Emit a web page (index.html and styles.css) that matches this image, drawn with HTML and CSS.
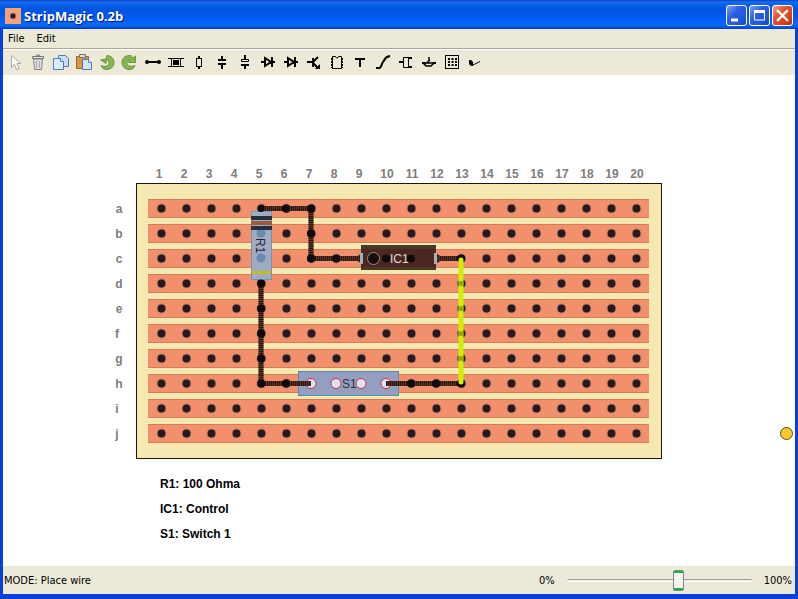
FILE: index.html
```html
<!DOCTYPE html>
<html lang="en">
<head>
<meta charset="utf-8">
<title>StripMagic 0.2b</title>
<link rel="stylesheet" href="styles.css">
</head>
<body>
<div class="window">
  <header class="titlebar">
    <svg class="app-icon" viewBox="0 0 16 16" aria-hidden="true"><rect width="16" height="16" fill="#f4a27a"/><circle cx="8" cy="8" r="3" fill="#2b1c1c" stroke="#a77" stroke-width="1"/></svg>
    <h1 class="title">StripMagic 0.2b</h1>
    <div class="window-buttons">
      <button class="wbtn" type="button" aria-label="Minimize"><svg viewBox="0 0 19 19"><path d="M4 14h7" stroke="#fff" stroke-width="3"/></svg></button>
      <button class="wbtn" type="button" aria-label="Maximize"><svg viewBox="0 0 19 19"><path d="M4.500 5v9h10V5" fill="none" stroke="#fff"/><path d="M4 5.500h11" stroke="#fff" stroke-width="3"/></svg></button>
      <button class="wbtn wbtn-close" type="button" aria-label="Close"><svg viewBox="0 0 19 19"><path d="M5 5l9 9M14 5l-9 9" stroke="#fff" stroke-width="2.400" stroke-linecap="square"/></svg></button>
    </div>
  </header>

  <nav class="menubar">
    <button class="menu" type="button">File</button>
    <button class="menu" type="button">Edit</button>
  </nav>

  <div class="toolbar" role="toolbar" aria-label="Tools">
    <button class="tool" type="button" aria-label="Select"><svg viewBox="0 0 23 23"><path d="M8.500 4.500v12l3-3 2 5 2.500-1-2-5h4z" fill="#fafafa" stroke="#aaa"/></svg></button>
    <button class="tool" type="button" aria-label="Delete"><svg viewBox="0 0 23 23"><path d="M7.500 8l1 10.500h7L16.500 8z" fill="#ddd" stroke="#888"/><path d="M10.500 10v7M13.500 10v7" stroke="#aaa"/><path d="M6.500 5.500h11v2h-11z" fill="#e8e8e8" stroke="#777"/><path d="M10.500 5V4h3v1" fill="none" stroke="#777"/></svg></button>
    <button class="tool" type="button" aria-label="Copy"><svg viewBox="0 0 23 23"><path d="M9.500 4.500h7l3 3v8h-10z" fill="#c9dcf8" stroke="#4a7cc4"/><path d="M4.500 7.500h7l3 3v8h-10z" fill="#deebfc" stroke="#4a7cc4"/><path d="M11.500 7.500v3h3" fill="#fff" stroke="#4a7cc4"/></svg></button>
    <button class="tool" type="button" aria-label="Paste"><svg viewBox="0 0 23 23"><path d="M4.500 5.500h12v12h-12z" fill="#d99547" stroke="#a3652a"/><path d="M7.500 3.500h6v3h-6z" fill="#ddd" stroke="#777"/><path d="M10.500 8.500h6l3 3v7h-9z" fill="#d4e4fa" stroke="#4a7cc4"/><path d="M16.500 8.500v3h3" fill="#fff" stroke="#4a7cc4"/></svg></button>
    <button class="tool" type="button" aria-label="Undo"><svg viewBox="0 0 23 23"><path d="M12 4.500c4 0 7 3 7 7s-3 7-7 7c-3 0-5-1-6-4 3 1.500 8 1 8-2.500 0-2-1-3-2.500-3l-.5 3.500L5.500 9 11 8z" fill="#86b552" stroke="#5b8a30" stroke-width=".8"/></svg></button>
    <button class="tool" type="button" aria-label="Redo"><svg viewBox="0 0 23 23"><path d="M11 4.500c-4 0-7 3-7 7s3 7 7 7c3 0 5-1 6-4-3 1.500-8 1-8-2.500 0-2 1-3 2.500-3l-1 2.500h7V5l-2.500 2C14 5 13 4.500 11 4.500z" fill="#86b552" stroke="#5b8a30" stroke-width=".8"/></svg></button>
    <button class="tool" type="button" aria-label="Wire"><svg viewBox="0 0 23 23"><path d="M6 11h12" stroke="#000" stroke-width="2"/><circle cx="6" cy="11" r="2"/><circle cx="18" cy="11" r="2"/></svg></button>
    <button class="tool" type="button" aria-label="Cut strip"><svg viewBox="0 0 23 23"><path d="M4 7.500h16M4 15.500h16M7.500 8v7M16.500 8v7" stroke="#000"/><rect x="9" y="9" width="6" height="5"/></svg></button>
    <button class="tool" type="button" aria-label="Resistor"><svg viewBox="0 0 23 23"><path d="M12 5v3M12 15v3" stroke="#000" stroke-width="2"/><rect x="9.500" y="7.500" width="5" height="8" fill="none" stroke="#000"/></svg></button>
    <button class="tool" type="button" aria-label="Capacitor"><svg viewBox="0 0 23 23"><path d="M12 5v4M12 13v5M8 9h8M8 13h8" stroke="#000" stroke-width="2"/></svg></button>
    <button class="tool" type="button" aria-label="Electrolytic capacitor"><svg viewBox="0 0 23 23"><path d="M12 4v4M12 14v4M8 14h8" stroke="#000" stroke-width="2"/><path d="M8.500 8.500h7v2h-7z" fill="none" stroke="#000"/></svg></button>
    <button class="tool" type="button" aria-label="Diode"><svg viewBox="0 0 23 23"><path d="M5 11h4M15 11h4M9 7l6 4-6 4zM16 6v10" fill="none" stroke="#000" stroke-width="2"/></svg></button>
    <button class="tool" type="button" aria-label="LED"><svg viewBox="0 0 23 23"><path d="M5 11h4M15 11h4M9 7l6 4-6 4zM16 6v10" fill="none" stroke="#000" stroke-width="2"/></svg></button>
    <button class="tool" type="button" aria-label="Transistor"><svg viewBox="0 0 23 23"><path d="M5 11h5M11 7v9M11 11l5-5M11 12l5 5" fill="none" stroke="#000" stroke-width="2"/><path d="M18 18v-5l-5 5z"/></svg></button>
    <button class="tool" type="button" aria-label="Integrated circuit"><svg viewBox="0 0 23 23"><path d="M7.500 5.500h3l1 1.500h1l1-1.500h3v12h-9z" fill="none" stroke="#000"/><path d="M7 7v10M17 7v10" stroke="#000" stroke-width="2" stroke-dasharray="2 1"/></svg></button>
    <button class="tool" type="button" aria-label="Text"><svg viewBox="0 0 23 23"><path d="M7 8h10M12 8v8" stroke="#000" stroke-width="2"/></svg></button>
    <button class="tool" type="button" aria-label="Flexible wire"><svg viewBox="0 0 23 23"><path d="M5 17h3c3 0 2-4 4-6s1-5 7-6" fill="none" stroke="#000" stroke-width="2"/></svg></button>
    <button class="tool" type="button" aria-label="Connector"><svg viewBox="0 0 23 23"><path d="M5 11h4M14 7h4M14 16h4" stroke="#000" stroke-width="2"/><path d="M9.500 6.500h5v10h-5z" fill="none" stroke="#000"/></svg></button>
    <button class="tool" type="button" aria-label="Switch"><svg viewBox="0 0 23 23"><path d="M5 12h3M16 12h3" stroke="#000" stroke-width="2"/><path d="M7 12v1l2 2h5l3-3zM8 13l5-4M12 6v6" fill="none" stroke="#000" stroke-width="1.500"/></svg></button>
    <button class="tool" type="button" aria-label="Board"><svg viewBox="0 0 23 23"><rect x="5.500" y="4.500" width="13" height="13" fill="none" stroke="#000"/><path d="M8 8h9M8 11h9M8 14h9" stroke="#000" stroke-width="2" stroke-dasharray="2 1.500"/></svg></button>
    <button class="tool" type="button" aria-label="Check"><svg viewBox="0 0 23 23"><path d="M6 9h2l2 2v4H8l-2-2z"/><path d="M9 14.500l8-4" stroke="#000"/></svg></button>
  </div>

  <main class="canvas">
    <svg class="drawing" viewBox="3 75 792 491" role="img" aria-label="Stripboard layout">
      <defs>
        <pattern id="strip" x="148" y="199" width="25" height="25" patternUnits="userSpaceOnUse">
          <rect width="25" height="19" fill="#d57b58"/>
          <rect y="1" width="25" height="17" fill="#f2906c"/>
          <circle cx="13.500" cy="9.500" r="4.900" fill="#b08078"/>
          <circle cx="13.500" cy="9.500" r="3.900" fill="#2a1917"/>
        </pattern>
      </defs>
      <rect class="board" x="136.500" y="183.500" width="525" height="275"/>
      <rect x="148" y="199" width="501" height="244" fill="url(#strip)"/>

      <g class="axis">
        <text x="159" y="178">1</text><text x="184" y="178">2</text><text x="209" y="178">3</text><text x="234" y="178">4</text><text x="259" y="178">5</text>
        <text x="284" y="178">6</text><text x="309" y="178">7</text><text x="334" y="178">8</text><text x="359" y="178">9</text><text x="387" y="178">10</text>
        <text x="412" y="178">11</text><text x="437" y="178">12</text><text x="462" y="178">13</text><text x="487" y="178">14</text><text x="512" y="178">15</text>
        <text x="537" y="178">16</text><text x="562" y="178">17</text><text x="587" y="178">18</text><text x="612" y="178">19</text><text x="637" y="178">20</text>
        <text x="119" y="213">a</text><text x="119" y="238">b</text><text x="119" y="263">c</text><text x="119" y="288">d</text><text x="119" y="313">e</text>
        <text x="117" y="338">f</text><text x="119" y="363">g</text><text x="119" y="388">h</text><text x="117" y="413">i</text><text x="117" y="438">j</text>
      </g>

      <g class="part">
        <rect x="251.500" y="211.500" width="20" height="68" fill="#9fabc2" stroke="#7494b5"/>
        <circle cx="261" cy="233" r="4.500" fill="#688cad"/><circle cx="261" cy="258" r="4.500" fill="#688cad"/>
        <path d="M251 218h21M251 228h21" stroke="#252f38" stroke-width="4"/>
        <path d="M251 223h21" stroke="#9a5a3c" stroke-width="4"/>
        <path d="M252 272.500h19" stroke="#c5bd28" stroke-width="3"/>
        <text class="label" transform="translate(256 238) rotate(90)" fill="#222">R1</text>
      </g>
      <g class="part">
        <rect x="298.500" y="371.500" width="100" height="24" fill="#939fc1" stroke="#578bb4"/>
        <g fill="#dde4f0" stroke="#dc2845"><circle cx="311" cy="383.500" r="5"/><circle cx="336" cy="383.500" r="5"/><circle cx="361" cy="383.500" r="5"/><circle cx="386" cy="383.500" r="5"/></g>
        <text class="label" x="342" y="388" fill="#333">S1</text>
      </g>

      <g class="wire">
        <path d="M261 208.500h50v50h50M261 283v100.500h50M386 383.500h75M436 258.500h25"/>
        <path class="wire-weave" d="M261 208.500h50M311 208v50M311 258.500h50M261 283v100M261 383.500h50M386 383.500h75M436 258.500h25"/>
      </g>
      <g fill="#100b0a"><circle cx="261" cy="208.500" r="3.500"/><circle cx="286" cy="208.500" r="4"/><circle cx="311" cy="208.500" r="4"/><circle cx="311" cy="233.500" r="4"/><circle cx="311" cy="258.500" r="4"/><circle cx="336" cy="258.500" r="4"/><circle cx="261" cy="283.500" r="4"/><circle cx="261" cy="308.500" r="4"/><circle cx="261" cy="333.500" r="4"/><circle cx="261" cy="358.500" r="4"/><circle cx="261" cy="383.500" r="4"/><circle cx="286" cy="383.500" r="4"/><circle cx="411" cy="383.500" r="4"/><circle cx="436" cy="383.500" r="4"/><circle cx="461" cy="383.500" r="4"/><circle cx="461" cy="258.500" r="4"/></g>
      <path d="M461 260v122" stroke="#cdf005" stroke-width="5" stroke-linecap="round"/>
      <g fill="#93a708"><circle cx="461" cy="283.500" r="2.500"/><circle cx="461" cy="308.500" r="2.500"/><circle cx="461" cy="333.500" r="2.500"/><circle cx="461" cy="358.500" r="2.500"/></g>

      <g class="part">
        <rect x="361" y="245" width="75" height="25" fill="#47392a"/>
        <rect x="361" y="249" width="75" height="18" fill="#4c271f"/>
        <path d="M360 253h3v11h-3zM434 253h3v11h-3z" fill="#a4afb8"/>
        <circle cx="386" cy="258.500" r="4" fill="#100b0a"/><circle cx="411" cy="258.500" r="4" fill="#100b0a"/>
        <circle cx="373.500" cy="258.500" r="6" fill="#180f0d" stroke="#9a8c82"/>
        <text class="label" x="390" y="263" fill="#ddd">IC1</text>
      </g>

      <g class="notes">
        <text x="160" y="488">R1: 100 Ohma</text>
        <text x="160" y="513">IC1: Control</text>
        <text x="160" y="538">S1: Switch 1</text>
      </g>
      <circle cx="786.500" cy="433.500" r="6" fill="#fac82d" stroke="#5e4c1c"/>
    </svg>
  </main>

  <footer class="statusbar">
    <span class="mode">MODE: Place wire</span>
    <label for="opacity">0%</label>
    <input class="slider" id="opacity" type="range" min="0" max="100" value="61">
    <label for="opacity">100%</label>
  </footer>
</div>
</body>
</html>
```
FILE: styles.css
```css
* { box-sizing: border-box; }

body {
  margin: 0;
  font-family: "DejaVu Sans Condensed", "Noto Sans", sans-serif;
  font-size: 11px;
  color: #000;
}

button {
  padding: 0;
  border: 0;
  background: none;
  font: inherit;
  color: inherit;
}

svg { display: block; }

.window {
  display: flex;
  flex-direction: column;
  min-height: 100vh;
  border: solid #0840dc;
  border-width: 0 3px 4px;
  background: #ece9d8;
  box-shadow: inset 0 -1px #0840dc;
}

.titlebar {
  display: flex;
  align-items: center;
  gap: 3px;
  height: 29px;
  margin: 0 -3px;
  padding: 2px 5px 0;
  background: linear-gradient(#0a3fc0 0, #1a6cf0 2px, #0560ea 5px, #0054e0 9px, #0058ec 16px, #0569fc 24px, #0560f2 26px, #003dc4 29px);
}

.app-icon { width: 16px; height: 16px; }

.title {
  flex: 1;
  margin: 0;
  font-family: "Open Sans", sans-serif;
  font-size: 13px;
  font-weight: 700;
  line-height: 18px;
  color: #fff;
  text-shadow: 1px 1px 1px #0a1883;
}

.window-buttons { display: flex; gap: 2px; }

.wbtn {
  width: 21px;
  height: 21px;
  border: 1px solid #fff;
  border-radius: 3px;
  background: linear-gradient(135deg, #7aa0f4, #2a5ee0 40%, #2458dc 70%, #1a48b8);
}

.wbtn-close { background: linear-gradient(135deg, #f0a080, #e2512c 40%, #d8441c 70%, #b03010); }

.menubar {
  display: flex;
  gap: 12px;
  height: 20px;
  padding: 0 5px;
  border-bottom: 1px solid #aca899;
}

.menu { line-height: 18px; }

.toolbar {
  display: flex;
  align-items: center;
  height: 26px;
  border-top: 1px solid #fff;
}

.tool { width: 23px; height: 23px; }

.canvas {
  flex: 1;
  overflow: hidden;
  background: #fff;
}

.drawing { width: 100%; }

.board { fill: #f5e8b0; stroke: #1a160c; }

.axis {
  font: bold 12px "Liberation Sans", sans-serif;
  fill: #7d7d7d;
  text-anchor: middle;
}

.label { font: 12px "Liberation Sans", sans-serif; }

.wire { fill: none; stroke: #5a3426; stroke-width: 5; }

.wire-weave { stroke: #2a1812; stroke-dasharray: 1 1; }

.notes { font: bold 12px "Liberation Sans", sans-serif; }

.statusbar {
  display: flex;
  align-items: center;
  height: 29px;
  padding: 0 3px 0 1px;
}

.mode { flex: 1; }

.slider {
  appearance: none;
  width: 185px;
  height: 22px;
  margin: 0 12px;
  background: none;
}

.slider::-webkit-slider-runnable-track {
  height: 3px;
  border-top: 1px solid #9d9c99;
  border-bottom: 1px solid #fff;
  border-radius: 2px;
  background: #f0eee4;
}

.slider::-webkit-slider-thumb {
  appearance: none;
  width: 11px;
  height: 21px;
  margin-top: -10px;
  border: 1px solid #778892;
  border-radius: 2px;
  background: linear-gradient(#21b32c 2px, #f4f3ee 2px, #f4f3ee 17px, #21b32c 17px);
}
```
